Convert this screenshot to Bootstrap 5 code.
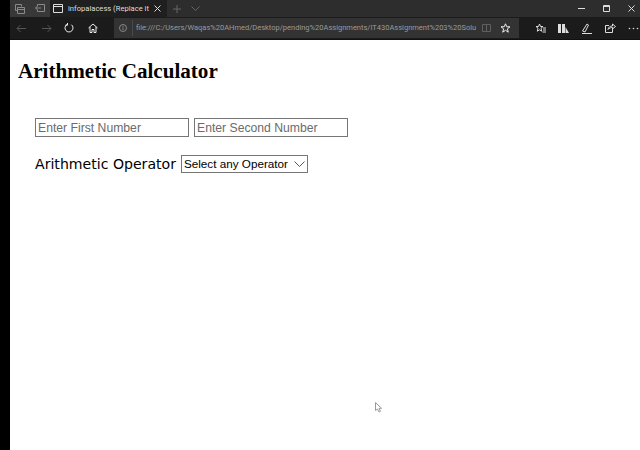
<!DOCTYPE html>
<html lang="en">
<head>
<meta charset="utf-8">
<title>Arithmetic Calculator</title>
<link href="https://cdn.jsdelivr.net/npm/bootstrap@5.3.0/dist/css/bootstrap.min.css" rel="stylesheet">
<style>
html,body{height:100%;overflow:hidden;background:#000}
.shell{height:450px;margin-left:10px;background:#fff}
.tabstrip{height:17px;background:#2d2d2d;color:#ddd}
.strip-btn{width:20px;height:17px}
.strip-left{background:#383838;width:40px}
.active-tab{width:117px;height:17px;background:#1f1f1f;padding-left:3px;font:7.6px "Roboto",sans-serif;color:#ddd;gap:5px}
.tabname{width:81px;white-space:nowrap}
.tab-extra{margin-left:6px;gap:10px}
.win-btns{gap:18px;padding-right:5px}
.toolbar{height:23px;background:#1b1b1b;border-bottom:1px solid #111}
.nav-icons{width:104px;padding-left:6px}
.nav-icons svg{flex:none}
.nav-forward{margin-left:16px}
.nav-reload{margin-left:12px}
.nav-home{margin-left:14px}
.addr{width:405px;height:20px;background:#333;color:#9a9a9a;font:7.5px "Roboto",sans-serif;padding:0 7px 0 5px;white-space:nowrap}
.addr-txt{flex:1;padding-left:3px;margin-left:5px;border-left:1px solid #4a4a4a;line-height:16px}
.addr-reader{margin-right:9px}
.addr-star{margin-right:1px}
.tools{flex:1;padding:0 1px 0 16px}
.page-area{position:relative;height:410px;padding:0 0 0 8px;color:#000}
.page-title{font:700 21.1px/24px "Liberation Serif",serif;margin:0;padding-top:19px}
.calc-form{padding:35px 0 0 17px}
.form-line{gap:5px}
.num-input{width:154px;height:19px;border:1px solid #767676;padding:0 2px;font:12.2px "Liberation Sans",sans-serif;border-radius:0;color:#000;outline:0;background:#fff}
.num-input::placeholder{color:#6b6b6b;opacity:1}
.op-row{margin-top:17px;gap:5px;height:20px}
.op-label{font:14.1px/20px "DejaVu Sans",sans-serif}
.op-select{width:127px;height:18px;border:1px solid #767676;font:11.7px/16px "Liberation Sans",sans-serif;padding-left:2px;background:#fff;white-space:nowrap}
.select-arrow{margin-right:2px}
.cursor-mark{position:absolute;left:365px;top:362px}
</style>
</head>
<body>
<div class="shell d-flex flex-column">
  <div class="tabstrip d-flex align-items-center">
    <div class="strip-left d-flex">
      <div class="strip-btn d-flex align-items-center justify-content-center">
        <svg width="10" height="10" viewBox="0 0 10 10" fill="none" stroke="#8a8a8a"><path d="M.5.5h6v2M2.500 3.500h7v6h-7zM.5.500v6h2M2.500 5.500h7"/></svg>
      </div>
      <div class="strip-btn d-flex align-items-center justify-content-center">
        <svg width="10" height="9" viewBox="0 0 10 9" fill="none" stroke="#8a8a8a"><path d="M2.500 2V.5h7v7h-7V6M6 4H.5M2.500 2L.5 4l2 2"/></svg>
      </div>
    </div>
    <div class="active-tab d-flex align-items-center">
      <svg width="10" height="9" viewBox="0 0 10 9" fill="none" stroke="#ddd" class="flex-shrink-0"><path d="M.5.500h9v8h-9zM.5 2.500h9"/></svg>
      <span class="tabname">infopalacess (Replace it</span>
      <svg width="7" height="7" viewBox="0 0 7 7" stroke="#ddd" fill="none" class="flex-shrink-0"><path d="M.5.500l6 6M6.500.500l-6 6"/></svg>
    </div>
    <div class="tab-extra d-flex align-items-center">
      <svg width="8" height="8" viewBox="0 0 8 8" stroke="#666" fill="none"><path d="M4 0v8M0 4h8"/></svg>
      <svg width="9" height="5" viewBox="0 0 9 5" stroke="#666" fill="none"><path d="M.5.500l4 4 4-4"/></svg>
    </div>
    <div class="win-btns d-flex align-items-center ms-auto">
      <svg width="7" height="7" viewBox="0 0 7 7" stroke="#ddd" fill="none"><path d="M0 3.500h7"/></svg>
      <svg width="7" height="7" viewBox="0 0 7 7" stroke="#ddd" fill="none"><path d="M.5.500h6v6h-6zM.5 1.500h6"/></svg>
      <svg width="7" height="7" viewBox="0 0 7 7" stroke="#ddd" fill="none"><path d="M.5.500l6 6M6.500.500l-6 6"/></svg>
    </div>
  </div>
  <div class="toolbar d-flex align-items-center">
    <div class="nav-icons d-flex align-items-center">
      <svg width="10" height="9" viewBox="0 0 10 9" stroke="#555" fill="none"><path d="M10 4.500H1M4.500 1L1 4.500 4.500 8"/></svg>
      <svg width="10" height="9" viewBox="0 0 10 9" stroke="#555" fill="none" class="nav-forward"><path d="M0 4.500h9M5.500 1L9 4.500 5.500 8"/></svg>
      <svg width="10" height="10" viewBox="0 0 10 10" stroke="#eee" fill="none" class="nav-reload"><path d="M7.300 1.700A4 4 0 1 1 3 1.500M3.500 0v2.200H1.300"/></svg>
      <svg width="10" height="10" viewBox="0 0 10 10" stroke="#eee" fill="none" class="nav-home"><path d="M.5 5L5 1l4.500 4M2 4v5.500h2V6.500h2v3h2V4"/></svg>
    </div>
    <div class="addr d-flex align-items-center">
      <svg width="8" height="8" viewBox="0 0 8 8" stroke="#888" fill="none" class="flex-shrink-0"><circle cx="4" cy="4" r="3.500"/><path d="M4 3.500V6M4 2v1"/></svg>
      <span class="addr-txt">file:///C:/Users/Waqas%20AHmed/Desktop/pending%20Assignments/IT430Assignment%203%20Solu</span>
      <svg width="9" height="8" viewBox="0 0 9 8" stroke="#5f5f5f" fill="none" class="addr-reader flex-shrink-0"><path d="M.5.500h8v7h-8zM4.500.500v7"/></svg>
      <svg width="11" height="10" viewBox="0 0 11 10" stroke="#eee" fill="none" class="addr-star flex-shrink-0"><path d="M5.500.800l1.300 3h3.200L7.400 5.800l.9 3.400-2.800-1.900-2.800 1.900.9-3.400L1 3.800h3.200z"/></svg>
    </div>
    <div class="tools d-flex align-items-center justify-content-between">
      <svg width="11" height="10" viewBox="0 0 11 10" stroke="#ddd" fill="none"><path d="M4.500 1l1 2.500H8L6 5.200l.7 3L4.500 6.800 2.300 8.200l.7-3-2-1.700h2.500zM8 5h3M8 7h3M7.500 9h3.500"/></svg>
      <svg width="11" height="10" viewBox="0 0 11 10" fill="#ddd"><path d="M0 1h3v9H0zM4 1h3v9H4zM7.500 4L11 10H7.500z"/></svg>
      <svg width="12" height="11" viewBox="0 0 12 11" stroke="#ddd" fill="none"><path d="M1.500 8L6 1l1.500 1L4 9zM1 10.500h10"/></svg>
      <svg width="11" height="10" viewBox="0 0 11 10" stroke="#ddd" fill="none"><path d="M4 2.500H.5v7h7V6M3 6.500c.5-2.500 2-3.500 4.500-3.500V1L10.500 3.500 7.500 6V4.500C6 4.500 4 5 3 6.500z"/></svg>
      <svg width="11" height="3" viewBox="0 0 11 3" fill="#ddd"><circle cx="1.500" cy="1.500" r=".8"/><circle cx="5.500" cy="1.500" r=".8"/><circle cx="9.500" cy="1.500" r=".8"/></svg>
    </div>
  </div>
  <div class="page-area bg-white">
    <h1 class="page-title">Arithmetic Calculator</h1>
    <form class="calc-form">
      <div class="form-line d-flex">
        <input class="num-input" type="text" placeholder="Enter First Number">
        <input class="num-input" type="text" placeholder="Enter Second Number">
      </div>
      <div class="op-row d-flex align-items-center">
        <span class="op-label">Arithmetic Operator</span>
        <div class="op-select d-flex align-items-center justify-content-between">
          <span>Select any Operator</span>
          <svg width="11" height="6" viewBox="0 0 11 6" stroke="#555" fill="none" class="select-arrow"><path d="M.5.500l5 5 5-5"/></svg>
        </div>
      </div>
    </form>
    <svg class="cursor-mark" width="7" height="11" viewBox="0 0 7 11" fill="#fff" stroke="#999"><path d="M.5.500v8l2-1.500 1.500 3 1.500-.7-1.500-3h2.500z"/></svg>
  </div>
</div>
<script src="https://cdn.jsdelivr.net/npm/bootstrap@5.3.0/dist/js/bootstrap.bundle.min.js"></script>
</body>
</html>
